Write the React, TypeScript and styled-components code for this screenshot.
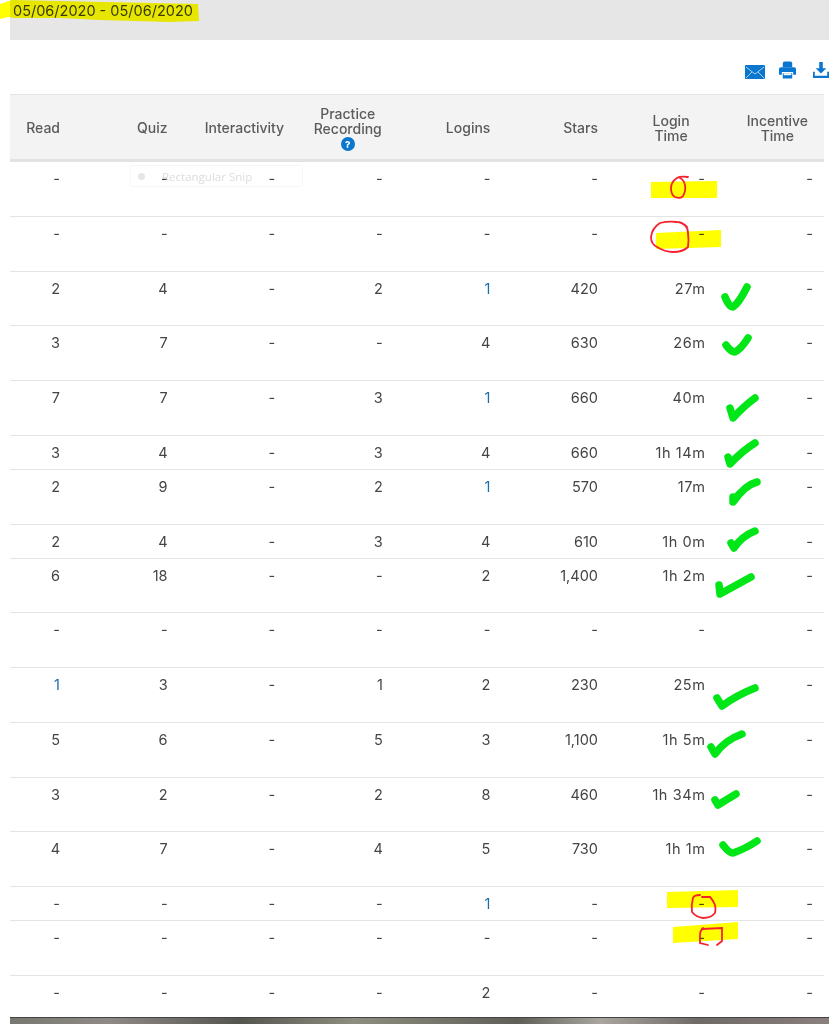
import React from 'react';
import styled, { createGlobalStyle } from 'styled-components';
import { FaQuestion } from 'react-icons/fa';

const FONT = `Inter, "Open Sans", "Liberation Sans", sans-serif`;
const BLUE = '#0b76cf';

interface RowData {
  cells: string[];
  short?: boolean;
  link?: number;
}

const EMPTY = ['-', '-', '-', '-', '-', '-', '-', '-'];

const rows: RowData[] = [
  { cells: EMPTY },
  { cells: EMPTY },
  { cells: ['2', '4', '-', '2', '1', '420', '27m', '-'], link: 4 },
  { cells: ['3', '7', '-', '-', '4', '630', '26m', '-'] },
  { cells: ['7', '7', '-', '3', '1', '660', '40m', '-'], link: 4 },
  { cells: ['3', '4', '-', '3', '4', '660', '1h 14m', '-'], short: true },
  { cells: ['2', '9', '-', '2', '1', '570', '17m', '-'], link: 4 },
  { cells: ['2', '4', '-', '3', '4', '610', '1h 0m', '-'], short: true },
  { cells: ['6', '18', '-', '-', '2', '1,400', '1h 2m', '-'] },
  { cells: EMPTY },
  { cells: ['1', '3', '-', '1', '2', '230', '25m', '-'], link: 0 },
  { cells: ['5', '6', '-', '5', '3', '1,100', '1h 5m', '-'] },
  { cells: ['3', '2', '-', '2', '8', '460', '1h 34m', '-'] },
  { cells: ['4', '7', '-', '4', '5', '730', '1h 1m', '-'] },
  { cells: ['-', '-', '-', '-', '1', '-', '-', '-'], short: true, link: 4 },
  { cells: EMPTY },
  { cells: ['-', '-', '-', '-', '2', '-', '-', '-'] },
];

const ticks = [
  'M725 297 Q729 307 733 307 Q739 303 747 287',
  'M726 345 Q731 352 735 352 Q741 349 748 338',
  'M730 408 L733 418 Q744 406 755 398',
  'M728 457 L730 464 Q742 451 755 443',
  'M733 497 L733 502 Q745 485 757 482',
  'M731 543 L734 548 Q742 536 755 531',
  'M719 585 L720 594 L751 577',
  'M717 698 L722 706 Q737 695 755 688',
  'M711 747 L715 754 Q725 740 742 734',
  'M715 800 L718 805 Q726 800 736 794',
  'M723 845 Q729 853 733 853 Q745 849 757 841',
];

const highlights = [
  '0,4 12,0 198,4 199,21 170,22 100,20 60,18 14,18 8,17 0,19',
  '651,182 717,181 717,198 651,198',
  '656,233 721,230 721,247 656,249',
  '667,892 738,890 738,907 667,908',
  '673,927 738,922 738,939 673,943',
];

const circles = [
  'M688 177 Q680 176 677 178 Q671 182 671 188 Q671 195 675 197 Q681 199 683 196 Q686 191 685 185 Q684 180 680 178',
  'M687 227 Q682 222 677 222 Q668 221 660 223 Q652 228 651 237 Q651 244 657 247 Q665 252 673 252 Q683 252 688 247 Q689 240 688 233 Q688 228 685 225',
  'M700 895 Q694 895 693 898 Q691 905 692 912 Q696 917 703 918 Q711 918 715 913 Q716 909 715 905 Q713 900 710 897 L702 897',
  'M703 928 Q700 931 700 935 L700 943 L708 945',
  'M702 929 L722 928 L722 941 L717 945',
];

function App() {
  return (
    <Page>
      <GlobalStyle />
      <DateBand>05/06/2020 - 05/06/2020</DateBand>
      <Toolbar>
        <ToolIcon width="20" height="14" viewBox="0 0 20 14">
          <rect width="20" height="14" rx="1" fill={BLUE} />
          <path d="M1 2 L10 9 L19 2 M1 13 L7 7 M19 13 L13 7" fill="none" stroke="#a9d2f2" strokeWidth="1" />
        </ToolIcon>
        <ToolIcon width="17" height="18" viewBox="0 0 18 18">
          <path d="M4 6 V2 Q4 0 6 0 H12 Q14 0 14 2 V6 Z" fill={BLUE} />
          <path d="M2 6 H16 Q18 6 18 8 V14 H15 V11 H3 V14 H0 V8 Q0 6 2 6 Z" fill={BLUE} />
          <rect x="4" y="12.5" width="10" height="5.5" fill={BLUE} />
          <rect x="5" y="12.5" width="8" height="2" fill="#fff" />
        </ToolIcon>
        <ToolIcon width="16" height="18" viewBox="0 0 18 18">
          <path d="M7 0 H11 V7 H15 L9 13 L3 7 H7 Z" fill={BLUE} />
          <path d="M0 11 H2 V15.5 H16 V11 H18 V18 H0 Z" fill={BLUE} />
        </ToolIcon>
      </Toolbar>
      <Table>
        <HeaderRow>
          <HeaderCell>Read</HeaderCell>
          <HeaderCell>Quiz</HeaderCell>
          <HeaderCell $pad={6}>Interactivity</HeaderCell>
          <HeaderCell $pad={16}>
            <PracticeLabel>
              Practice
              <br />
              Recording
              <br />
              <HelpBadge>
                <FaQuestion size={7} color="#fff" />
              </HelpBadge>
            </PracticeLabel>
          </HeaderCell>
          <HeaderCell>Logins</HeaderCell>
          <HeaderCell>Stars</HeaderCell>
          <HeaderCell $pad={31}>
            <span>
              Login
              <br />
              Time
            </span>
          </HeaderCell>
          <HeaderCell $pad={16}>
            <span>
              Incentive
              <br />
              Time
            </span>
          </HeaderCell>
        </HeaderRow>
        {rows.map((row, i) => (
          <Row key={i} $short={row.short}>
            {row.cells.map((cell, j) => (
              <Cell key={j} $link={row.link === j}>
                {cell}
              </Cell>
            ))}
          </Row>
        ))}
      </Table>
      <BottomStrip />
      <SnipGhost>
        <SnipDot />
        <SnipLabel>Rectangular Snip</SnipLabel>
      </SnipGhost>
      <Annotations viewBox="0 0 829 1024">
        {highlights.map((points) => (
          <polygon key={points} points={points} fill="#ffff00" style={{ mixBlendMode: 'multiply' }} />
        ))}
        {circles.map((d) => (
          <path key={d} d={d} fill="none" stroke="#f5222d" strokeWidth="1.8" strokeLinecap="round" />
        ))}
        {ticks.map((d) => (
          <path key={d} d={d} fill="none" stroke="#00e617" strokeWidth="7.5" strokeLinecap="round" strokeLinejoin="round" />
        ))}
      </Annotations>
    </Page>
  );
}

export default App;

const GlobalStyle = createGlobalStyle`
  html, body {
    margin: 0;
    padding: 0;
    background: #fff;
  }
`;

const Page = styled.div`
  position: relative;
  width: 829px;
  height: 1024px;
  padding-left: 10px;
  box-sizing: border-box;
  display: flex;
  flex-direction: column;
  overflow: hidden;
  isolation: isolate;
  background: #fff;
  font-family: ${FONT};
  color: #444;
`;

const DateBand = styled.div`
  height: 40px;
  flex: none;
  padding: 2px 0 0 3px;
  box-sizing: border-box;
  background: #e6e6e6;
  font-size: 14.5px;
  line-height: 18px;
  color: #3a3a3a;
`;

const Toolbar = styled.div`
  height: 54px;
  flex: none;
  padding-bottom: 15px;
  box-sizing: border-box;
  display: flex;
  justify-content: flex-end;
  align-items: flex-end;
  gap: 14px;

  svg:last-child {
    margin-left: 3px;
  }
`;

const ToolIcon = styled.svg`
  flex: none;
  display: block;
`;

const Table = styled.div`
  flex: 1;
  min-height: 0;
  width: 814px;
`;

const COLUMNS = '65px repeat(6, 107.6px) 103.4px';

const HeaderRow = styled.div`
  height: 68px;
  padding-top: 1px;
  box-sizing: border-box;
  display: grid;
  grid-template-columns: ${COLUMNS};
  background: #f3f3f3;
  border-top: 1px solid #e4e4e4;
  border-bottom: 3px solid #e2e2e2;
`;

const HeaderCell = styled.div<{ $pad?: number }>`
  display: flex;
  justify-content: flex-end;
  align-items: center;
  padding-right: ${({ $pad }) => $pad ?? 15}px;
  font-size: 14px;
  font-weight: 500;
  line-height: 15px;
  color: #5b5b5b;
  text-align: center;
  white-space: nowrap;
`;

const PracticeLabel = styled.span`
  padding-top: 2px;
`;

const HelpBadge = styled.span`
  display: inline-flex;
  align-items: center;
  justify-content: center;
  width: 14px;
  height: 14px;
  border-radius: 50%;
  background: ${BLUE};
  vertical-align: top;
  margin-top: 1px;
`;

const Row = styled.div<{ $short?: boolean }>`
  height: ${({ $short }) => ($short ? '34px' : '54.75px')};
  box-sizing: border-box;
  display: grid;
  grid-template-columns: ${COLUMNS};
  border-bottom: 1px solid #e4e4e4;

  &:last-child {
    border-bottom: none;
  }
`;

const Cell = styled.div<{ $link?: boolean }>`
  padding: 8px 15px 0 0;
  font-size: 14.5px;
  line-height: 17px;
  text-align: right;
  color: ${({ $link }) => ($link ? '#1b6fa8' : '#444')};

  &:nth-child(7) {
    letter-spacing: 0.6px;
  }

  &:last-child {
    padding-right: 11px;
  }
`;

const BottomStrip = styled.div`
  height: 6px;
  flex: none;
  border-top: 1px solid #444;
  background: linear-gradient(
    90deg,
    #77776f 0%,
    #8f8a86 12%,
    #55554f 28%,
    #8d8d80 42%,
    #5f5f58 62%,
    #a9a6a0 72%,
    #6e6a66 84%,
    #8a7f7c 100%
  );
`;

const SnipGhost = styled.div`
  position: absolute;
  left: 130px;
  top: 165px;
  width: 173px;
  height: 22px;
  box-sizing: border-box;
  display: flex;
  align-items: center;
  border: 1px solid #f4f7fb;
  border-radius: 2px;
  z-index: -1;
`;

const SnipDot = styled.div`
  width: 7px;
  height: 7px;
  margin: 0 17px 0 7px;
  border-radius: 50%;
  background: #e6e6e6;
`;

const SnipLabel = styled.span`
  font-family: "Open Sans", sans-serif;
  font-size: 11.5px;
  color: #dcdcdc;
`;

const Annotations = styled.svg`
  position: absolute;
  left: 0;
  top: 0;
  width: 829px;
  height: 1024px;
  pointer-events: none;
`;
